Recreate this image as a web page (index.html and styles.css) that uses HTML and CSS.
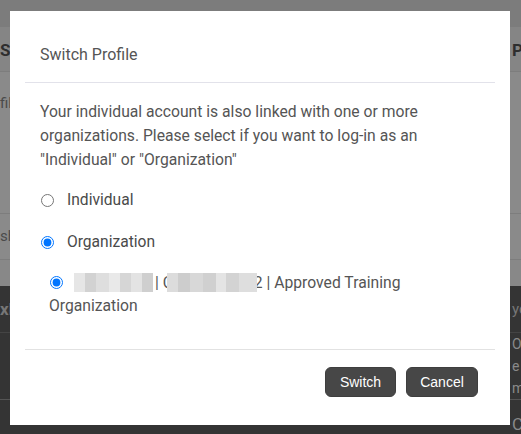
FILE: index.html
```html
<!DOCTYPE html>
<html lang="en">
<head>
    <meta charset="UTF-8">
    <meta name="viewport" content="width=device-width, initial-scale=1.0">
    <title>Switch Profile</title>
    <link rel="stylesheet" href="styles.css">
</head>
<body>
    <div class="page">
        <div class="topbar"></div>
        <div class="band heading">
            <span class="left">SKILLS</span>
            <span class="right">PAYMENTS</span>
        </div>
        <div class="band profile">
            <span class="left light">fil</span>
        </div>
        <div class="band share">
            <span class="left light">sh</span>
        </div>
        <div class="band spacer"></div>
        <div class="dark">
            <div class="dark-row"><span class="left">xh</span><span class="right">you</span></div>
            <div class="dark-row"><span class="left"></span><span class="right">Onli</span></div>
            <div class="dark-row"><span class="left"></span><span class="right">e N</span></div>
            <div class="dark-row"><span class="left"></span><span class="right">mi</span></div>
            <div class="dark-row last"><span class="left"></span><span class="right">Complete</span></div>
        </div>
    </div>

    <div class="modal">
        <div class="modal-header">
            <h2>Switch Profile</h2>
        </div>
        <div class="modal-body">
            <p class="intro">Your individual account is also linked with one or more organizations. Please select if you want to log-in as an "Individual" or "Organization"</p>

            <label class="option">
                <input type="radio" name="profile" value="individual">
                <span>Individual</span>
            </label>
            <label class="option">
                <input type="radio" name="profile" value="organization" checked>
                <span>Organization</span>
            </label>

            <p class="org">
                <input type="radio" name="org" checked>
                <span class="redact r1"></span>| C<span class="redact r2"></span>2 | Approved Training Organization
            </p>
        </div>
        <div class="modal-footer">
            <button class="btn switch">Switch</button>
            <button class="btn cancel">Cancel</button>
        </div>
    </div>
</body>
</html>
```

FILE: styles.css
```css
html, body {
    margin: 0;
    padding: 0;
    height: 100%;
    overflow: hidden;
}
body {
    font-family: Roboto, "Noto Sans", Arial, sans-serif;
    background-color: #353535;
}
.page {
    height: 434px;
    display: flex;
    flex-direction: column;
}
.topbar {
    height: 28px;
    background-color: #7c7c7c;
    border-bottom: 1px solid #858585;
    box-sizing: border-box;
}
.band {
    display: grid;
    grid-template-columns: 512px 1fr;
    align-items: center;
    background-color: #8a8a8a;
    border-bottom: 1px solid #7d7d7d;
    box-sizing: border-box;
    overflow: hidden;
    white-space: nowrap;
}
.heading {
    height: 45px;
    font-weight: bold;
    font-size: 17px;
    color: #2e2e2e;
    background-color: #858585;
}
.profile {
    height: 142px;
    align-items: start;
    padding-top: 22px;
}
.share {
    height: 47px;
}
.spacer {
    height: 26px;
    border-bottom: none;
    background-color: #888;
}
.light {
    font-size: 15px;
    color: #4a4a4a;
}
.dark {
    flex: 1;
    background-color: #343434;
    color: #8a8a8a;
    font-size: 14px;
}
.dark-row {
    display: grid;
    grid-template-columns: 512px 1fr;
    height: 22px;
    align-items: center;
    overflow: hidden;
    white-space: nowrap;
}
.dark-row:first-child {
    height: 46px;
    font-weight: bold;
    font-size: 17px;
    color: #777;
    border-bottom: 1px solid #444;
}
.dark-row:first-child .right {
    font-weight: normal;
    font-size: 15px;
}
.dark-row.last {
    height: 34px;
    align-items: end;
    font-size: 17px;
    border-top: 1px solid #555;
}

.modal {
    position: absolute;
    top: 11px;
    left: 10px;
    width: 500px;
    height: 414px;
    background-color: white;
    display: flex;
    flex-direction: column;
    color: #555;
}
.modal-header {
    margin: 0 15px;
    padding: 33px 15px 17px;
    border-bottom: 1px solid #e2e2ea;
}
.modal-header h2 {
    margin: 0;
    font-size: 16px;
    font-weight: normal;
    line-height: 21px;
}
.modal-body {
    flex: 1;
    padding: 17px 30px 0;
}
.intro {
    margin: 0 0 16px;
    font-size: 15.7px;
    line-height: 24px;
}
.option {
    display: flex;
    align-items: center;
    height: 24px;
    margin-bottom: 18px;
    font-size: 15.6px;
    color: #4a4a4a;
    cursor: pointer;
}
.option input {
    margin: 0 13px 0 1px;
    width: 13px;
    height: 13px;
}
.org {
    margin: -1px 0 0 9px;
    font-size: 15.7px;
    line-height: 23px;
}
.org input {
    margin: 0 7px 0 1px;
    width: 13px;
    height: 13px;
    vertical-align: -1px;
}
.redact {
    display: inline-block;
    height: 19px;
    vertical-align: -4px;
    background-image:
        linear-gradient(90deg, #e6e6e6 0 14%, #d2d2d2 14% 28%, #dedede 28% 44%, #e9e9e9 44% 58%, #d6d6d6 58% 72%, #e3e3e3 72% 86%, #cfcfcf 86% 100%);
}
.r1 {
    width: 79px;
    margin-right: 2px;
}
.r2 {
    width: 90px;
    margin-left: -6px;
    margin-right: -3px;
    position: relative;
    background-image:
        linear-gradient(90deg, #dcdcdc 0 12%, #cdcdcd 12% 26%, #d8d8d8 26% 40%, #d0d0d0 40% 54%, #e4e4e4 54% 66%, #d3d3d3 66% 80%, #dedede 80% 100%);
}
.modal-footer {
    margin: 0 15px;
    padding: 17px 17px 28px;
    border-top: 1px solid #e2e2e2;
    display: flex;
    justify-content: flex-end;
    gap: 10px;
}
.btn {
    height: 30px;
    padding: 0;
    border: 1px solid #3e3e3e;
    border-radius: 6px;
    background-color: #474747;
    color: white;
    font-family: "Liberation Sans", Arial, sans-serif;
    font-size: 14px;
    cursor: pointer;
}
.switch {
    width: 71px;
}
.cancel {
    width: 72px;
}
.btn:hover {
    background-color: #333;
}
```
